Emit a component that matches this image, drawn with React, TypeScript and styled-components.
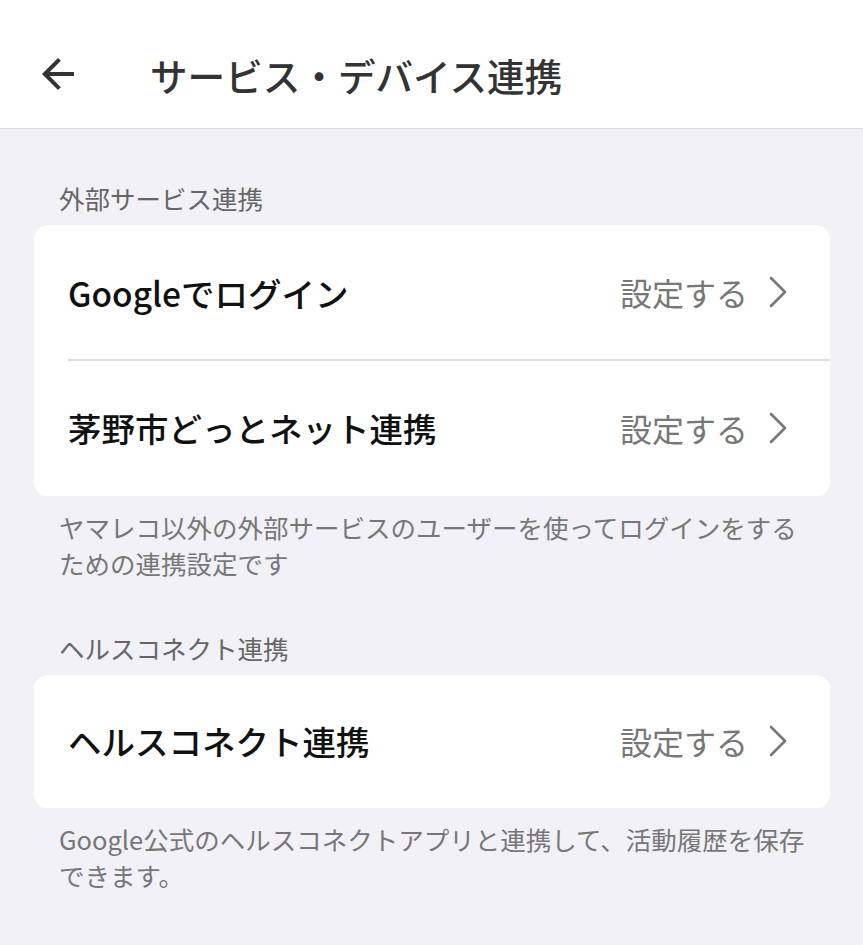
import React from "react";
import styled, { createGlobalStyle } from "styled-components";

const GlobalStyle = createGlobalStyle`
    html, body {
        margin: 0;
        padding: 0;
        background-color: #f2f1f7;
    }
    body {
        font-family: "Noto Sans CJK JP", "Noto Sans", Roboto, sans-serif;
    }
`;

const Page = styled.div`
    min-height: 945px;
    background-color: #f2f1f7;
`;

const Header = styled.header`
    height: 129px;
    box-sizing: border-box;
    display: flex;
    align-items: center;
    background-color: #ffffff;
    border-bottom: 1px solid #dcdcdc;
    padding: 20px 0 0 34px;
    svg {
        display: block;
    }
`;

const Title = styled.h1`
    margin: 0 0 0 68px;
    font-size: 37.6px;
    font-weight: 500;
    color: #333333;
`;

const Content = styled.main`
    padding: 51px 33px 40px 34px;
`;

const SectionLabel = styled.div<{ $top?: number }>`
    margin-top: ${(p) => p.$top ?? 0}px;
    padding-left: 25px;
    font-size: 25.5px;
    line-height: 36px;
    color: #666666;
`;

const Card = styled.section`
    margin-top: 9px;
    background-color: #ffffff;
    border-radius: 14px;
    overflow: hidden;
`;

const Row = styled.div<{ $height: number; $divider?: boolean }>`
    height: ${(p) => p.$height}px;
    display: flex;
    align-items: center;
    padding: 0 42px 0 34px;
    position: relative;
    cursor: pointer;
    ${(p) =>
        p.$divider &&
        `
        &::after {
            content: "";
            position: absolute;
            left: 34px;
            right: 0;
            bottom: 0;
            height: 2px;
            background-color: #dddddd;
        }
    `}
`;

const RowLabel = styled.span`
    flex: 1;
    font-size: 33.5px;
    font-weight: 500;
    color: #111111;
    margin-top: -2px;
`;

const RowValue = styled.span`
    display: flex;
    align-items: center;
    gap: 20px;
    font-size: 32px;
    color: #777777;
    margin-top: -2px;
    svg {
        display: block;
    }
`;

const Note = styled.p`
    margin: 13px 0 0 0;
    padding-left: 25px;
    padding-right: 20px;
    font-size: 25.5px;
    line-height: 36px;
    color: #777777;
`;

const BackArrow = () => (
    <svg width="48" height="48" viewBox="0 0 24 24" fill="#333333">
        <path d="M20 11H7.83l5.59-5.59L12 4l-8 8 8 8 1.41-1.41L7.83 13H20v-2z" />
    </svg>
);

const Chevron = () => (
    <svg width="20" height="32" viewBox="0 0 20 32" fill="none">
        <polyline
            points="3,2 17,16 3,30"
            stroke="#777777"
            strokeWidth="2.6"
            strokeLinecap="round"
            strokeLinejoin="round"
        />
    </svg>
);

const SettingRow = ({ label, height, divider }: { label: string; height: number; divider?: boolean }) => (
    <Row $height={height} $divider={divider}>
        <RowLabel>{label}</RowLabel>
        <RowValue>
            設定する
            <Chevron />
        </RowValue>
    </Row>
);

export default function App() {
    return (
        <Page>
            <GlobalStyle />
            <Header>
                <BackArrow />
                <Title>サービス・デバイス連携</Title>
            </Header>
            <Content>
                <SectionLabel>外部サービス連携</SectionLabel>
                <Card>
                    <SettingRow label="Googleでログイン" height={136} divider />
                    <SettingRow label="茅野市どっとネット連携" height={135} />
                </Card>
                <Note>ヤマレコ以外の外部サービスのユーザーを使ってログインをするための連携設定です</Note>

                <SectionLabel $top={49}>ヘルスコネクト連携</SectionLabel>
                <Card>
                    <SettingRow label="ヘルスコネクト連携" height={133} />
                </Card>
                <Note>Google公式のヘルスコネクトアプリと連携して、活動履歴を保存できます。</Note>
            </Content>
        </Page>
    );
}
